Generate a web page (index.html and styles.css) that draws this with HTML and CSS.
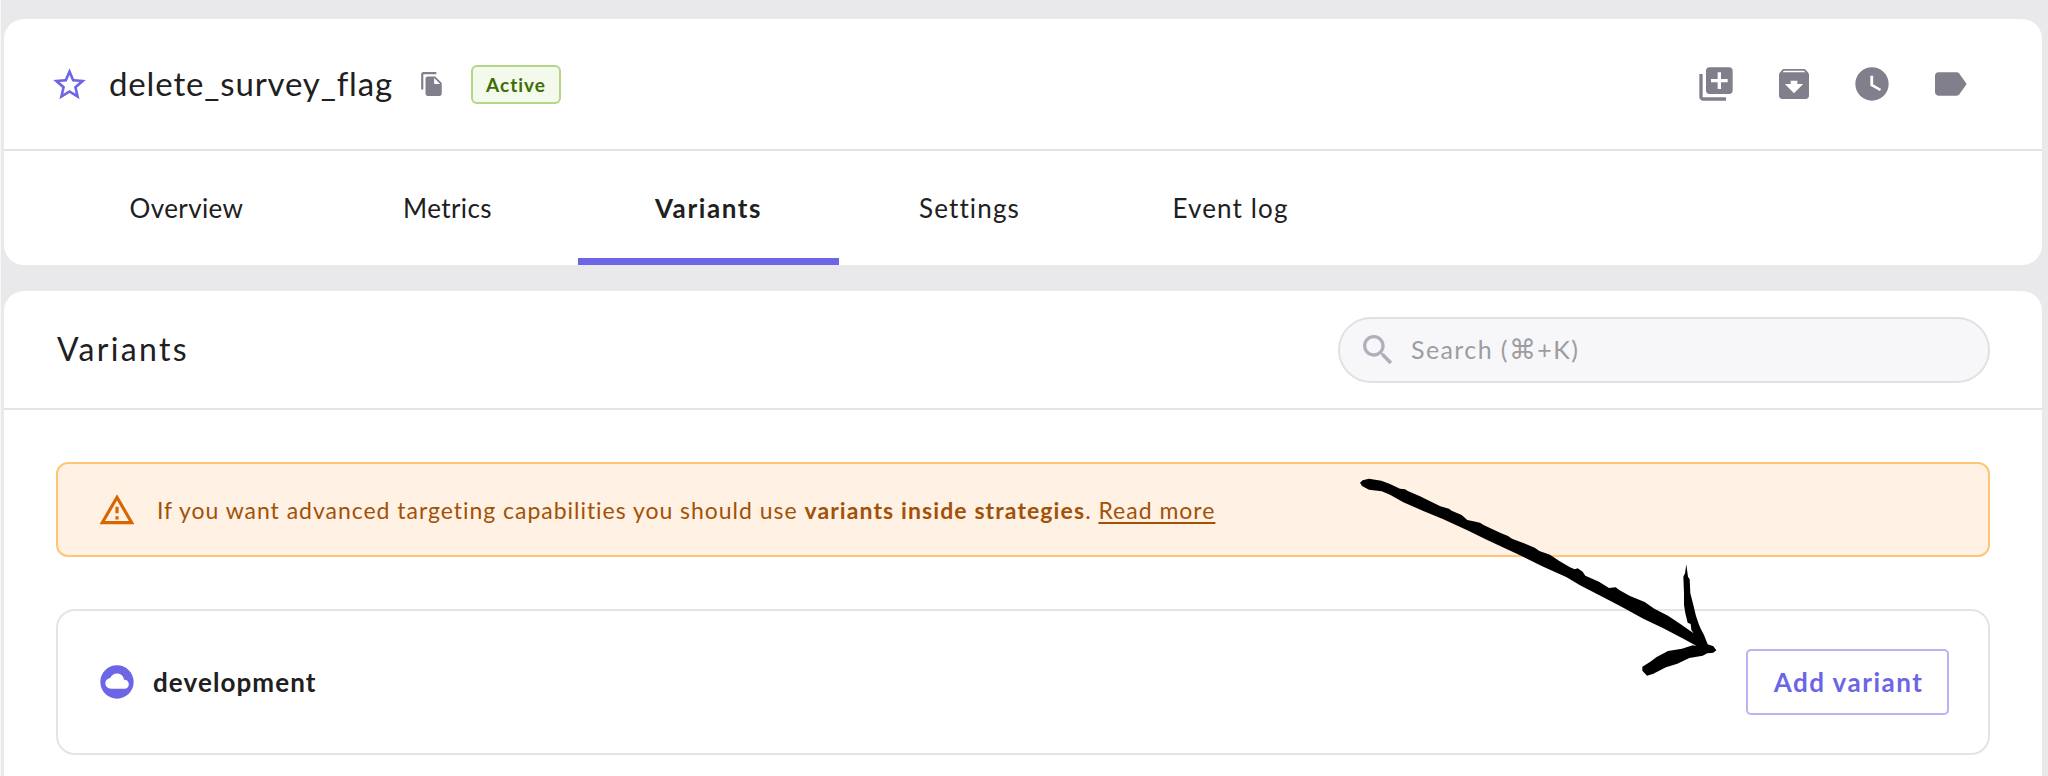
FILE: index.html
```html
<!DOCTYPE html>
<html lang="en">
<head>
<meta charset="utf-8">
<title>delete_survey_flag</title>
<link rel="stylesheet" href="styles.css">
</head>
<body>
<main class="page">
  <section class="card flag">
    <header class="flag-head">
      <svg class="star" viewBox="0 0 24 24"><path d="m22 9.24-7.19-.62L12 2 9.19 8.63 2 9.24l5.46 4.73L5.82 21 12 17.27 18.18 21l-1.63-7.03L22 9.24zM12 15.4l-3.76 2.27 1-4.28-3.32-2.88 4.38-.38L12 6.1l1.71 4.04 4.38.38-3.32 2.88 1 4.28L12 15.4z"/></svg>
      <h1 class="flag-name">delete_survey_flag</h1>
      <svg class="copy" viewBox="0 0 24 24"><path d="M16 1H4c-1.1 0-2 .9-2 2v14h2V3h12V1zm-1 4 6 6v10c0 1.1-.9 2-2 2H7.99C6.89 23 6 22.1 6 21l.01-14c0-1.1.89-2 1.99-2h7zm-1 7h5.500L14 6.500V12z"/></svg>
      <span class="badge">Active</span>
      <div class="actions">
        <svg viewBox="0 0 24 24"><path d="M4 6H2v14c0 1.100.9 2 2 2h14v-2H4V6zm16-4H8c-1.100 0-2 .9-2 2v12c0 1.100.9 2 2 2h12c1.100 0 2-.9 2-2V4c0-1.100-.9-2-2-2zm-1 9h-4v4h-2v-4H9V9h4V5h2v4h4v2z"/></svg>
        <svg viewBox="0 0 24 24"><path d="m20.540 5.230-1.390-1.680C18.880 3.210 18.470 3 18 3H6c-.47 0-.88.21-1.160.55L3.460 5.230C3.170 5.570 3 6.020 3 6.500V19c0 1.100.9 2 2 2h14c1.100 0 2-.9 2-2V6.500c0-.48-.17-.93-.46-1.270zM12 17.500 6.500 12H10v-2h4v2h3.500L12 17.500zM5.120 5l.81-1h12l.94 1H5.120z"/></svg>
        <svg viewBox="0 0 24 24"><path d="M11.990 2C6.470 2 2 6.480 2 12s4.470 10 9.990 10C17.520 22 22 17.520 22 12S17.520 2 11.990 2zm4.700 14.200L11 13V7h1.700v5.200l4.800 2.800z"/></svg>
        <svg viewBox="0 0 24 24"><path d="M17.630 5.840C17.270 5.330 16.670 5 16 5L5 5.010C3.900 5.010 3 5.900 3 7v10c0 1.100.9 1.990 2 1.990L16 19c.67 0 1.270-.33 1.630-.84L22 12l-4.370-6.160z"/></svg>
      </div>
    </header>
    <nav class="tabs">
      <a class="tab">Overview</a>
      <a class="tab">Metrics</a>
      <a class="tab active">Variants</a>
      <a class="tab wide">Settings</a>
      <a class="tab wide">Event log</a>
    </nav>
  </section>

  <section class="card variants">
    <header class="variants-head">
      <h2 class="variants-title">Variants</h2>
      <div class="search">
        <svg viewBox="0 0 24 24"><path d="M15.500 14h-.79l-.28-.27C15.410 12.590 16 11.110 16 9.500 16 5.910 13.090 3 9.500 3S3 5.910 3 9.500 5.910 16 9.500 16c1.610 0 3.090-.59 4.230-1.570l.27.28v.79l5 4.990L20.490 19l-4.990-5zm-6 0C7.010 14 5 11.990 5 9.500S7.010 5 9.500 5 14 7.010 14 9.500 11.990 14 9.500 14z"/></svg>
        <span class="placeholder">Search (<span class="key">⌘</span>+K)</span>
      </div>
    </header>
    <div class="variants-body">
      <div class="alert">
        <svg viewBox="0 0 24 24"><path d="M12 5.990 19.530 19H4.470L12 5.990M12 2 1 21h22L12 2zm1 14h-2v2h2v-2zm0-6h-2v4h2v-4z"/></svg>
        <p>If you want advanced targeting capabilities you should use <b>variants inside strategies</b>. <a>Read more</a></p>
      </div>
      <div class="environment">
        <svg viewBox="0 0 24 24"><path d="M12 2C6.480 2 2 6.480 2 12s4.480 10 10 10 10-4.480 10-10S17.520 2 12 2zm4.500 14h-8C6.570 16 5 14.430 5 12.900c0-1.750 1.250-3.150 2.950-3.350C8.700 7.900 10.200 6.900 12 6.900c2.250 0 4 1.600 4.200 3.700h.3c1.500 0 2.600 1.200 2.600 2.700s-1.100 2.700-2.600 2.700z"/></svg>
        <span class="environment-name">development</span>
        <button class="add">Add variant</button>
      </div>
    </div>
  </section>
  <svg class="arrow" viewBox="0 0 1200 720"><path d="M60 68 68 61 87 56 124 62 150 72 180 86 195 88 205 94 240 109 301 139 327 146 335 152 365 165 382 180 400 184 420 188 432 196 482 219 504 228 516 236 548 248 584 263 598 273 630 284 658 303 690 322 704 328 713 325 728 335 736 347 777 365 807 384 827 382 839 391 870 408 914 426 943 446 984 467 1020 491 1061 520 1054 510 1052 492 1043 488 1036 460 1032 435 1032 400 1030 350 1035 340 1039 313 1044 350 1049 358 1051 400 1060 435 1068 468 1077 494 1083 508 1092 525 1103 553 1120 559 1129 571 1120 578 1102 580 1088 587 1048 594 1012 611 978 622 940 641 921 647 907 632 907 620 931 605 950 591 984 573 1026 566 1058 556 1070 558 1030 536 970 505 910 476 850 443 810 422 720 376 680 352 605 318 540 286 440 239 385 212 310 178 250 153 190 127 150 104 125 94 87 89 66 78Z"/></svg>
</main>
</body>
</html>
```
FILE: styles.css
```css
* { box-sizing: border-box; }
body {
  margin: 0;
  background: #e9e9eb;
  font-family: Lato, sans-serif;
  color: #202021;
}
h1, h2, p { margin: 0; font-weight: 400; }
svg { display: block; flex: none; fill: currentColor; }

.page {
  position: relative;
  display: flex;
  flex-direction: column;
  gap: 26px;
  height: 776px;
  padding: 19px 6px 0 3px;
  border-left: 1px solid #f8f8f9;
  overflow: hidden;
}
.card { background: #fff; border-radius: 20px; overflow: hidden; flex: none; }

.flag { height: 246px; }
.flag-head {
  display: flex;
  align-items: center;
  height: 132px;
  padding: 0 72px 0 46px;
  border-bottom: 2px solid #e3e3e4;
}
.star { width: 39px; height: 39px; color: #6c65e5; }
.flag-name { margin-left: 20px; padding-bottom: 3px; width: 310px; font-size: 33px; letter-spacing: .85px; white-space: nowrap; }
.copy { width: 26px; height: 26px; color: #817f8b; }
.badge {
  display: flex;
  align-items: center;
  justify-content: center;
  width: 90px;
  height: 39px;
  margin-left: 26px;
  border: 2px solid #b5d688;
  border-radius: 6px;
  background: #f3f9eb;
  color: #3d6d04;
  font-size: 19px;
  font-weight: 700;
  letter-spacing: 1px;
}
.actions { display: flex; gap: 38px; margin-left: auto; color: #817f8b; }
.actions svg { width: 40px; height: 40px; }

.tabs { display: flex; height: 114px; padding-left: 52px; }
.tab {
  display: flex;
  align-items: center;
  justify-content: center;
  width: 261px;
  font-size: 26px;
  letter-spacing: .4px;
}
.tab.wide { letter-spacing: 1.15px; }
.tab.active { padding-top: 7px; border-bottom: 7px solid #6c65e5; font-weight: 700; letter-spacing: 1.6px; }

.variants { height: 520px; }
.variants-head {
  display: flex;
  align-items: center;
  justify-content: space-between;
  height: 119px;
  padding: 0 52px 0 53px;
  border-bottom: 2px solid #e3e3e5;
}
.variants-title { padding-bottom: 2px; font-size: 32px; letter-spacing: 2.3px; }
.search {
  display: flex;
  align-items: center;
  gap: 13px;
  width: 652px;
  height: 66px;
  padding-left: 18px;
  border: 2px solid #e1e1e3;
  border-radius: 33px;
  background: #f7f7fa;
  color: #9d9da0;
  font-size: 25px;
  letter-spacing: 1.4px;
}
.search svg { width: 40px; height: 40px; color: #b0afba; }
.placeholder { padding-bottom: 2px; line-height: 30px; }
.key { font-family: "DejaVu Sans", sans-serif; font-size: 27px; line-height: 1; }

.variants-body { display: flex; flex-direction: column; gap: 52px; padding: 52px 52px 0; }
.alert {
  display: flex;
  align-items: center;
  gap: 21px;
  height: 95px;
  padding-left: 40px;
  border: 2px solid #ffc577;
  border-radius: 12px;
  background: #fff2e4;
  color: #a35107;
  font-size: 23px;
  letter-spacing: .97px;
}
.alert svg { width: 38px; height: 38px; color: #d76500; }
.alert b { letter-spacing: 1.1px; }
.alert a { text-decoration: underline; text-underline-offset: 3px; letter-spacing: 1px; }

.environment {
  display: flex;
  align-items: center;
  height: 146px;
  padding: 0 39px;
  border: 2px solid #e4e4e5;
  border-radius: 19px;
}
.environment svg { width: 40px; height: 40px; color: #6c65e5; }
.environment-name { margin-left: 16px; padding-bottom: 1px; font-size: 26px; font-weight: 700; letter-spacing: 1.1px; }
.add {
  width: 203px;
  height: 66px;
  margin-left: auto;
  padding: 0 0 1px 2px;
  border: 2px solid #b8b3f3;
  border-radius: 5px;
  background: #fff;
  color: #6c65e5;
  font: 700 26px Lato, sans-serif;
  letter-spacing: 1.5px;
}

/* Hand-drawn pointer over the alert and the environment row */
.arrow { position: absolute; left: 1339px; top: 460px; width: 400px; height: 240px; color: #000; }
```
